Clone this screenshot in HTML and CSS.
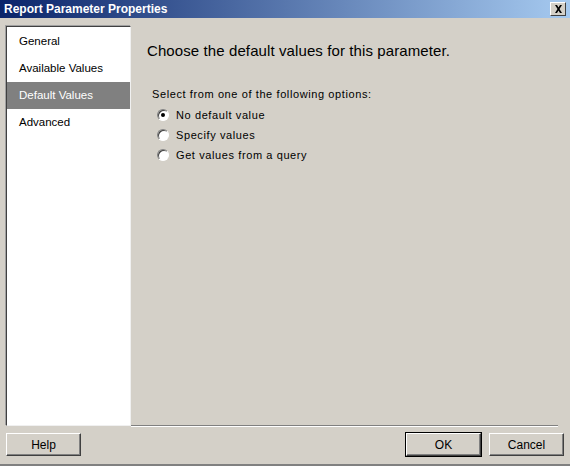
FILE: index.html
```html
<!DOCTYPE html>
<html lang="en">
<head>
    <meta charset="UTF-8">
    <title>Report Parameter Properties</title>
    <link rel="stylesheet" href="styles.css">
</head>
<body>
    <div class="window">
        <div class="titlebar">
            <span class="title">Report Parameter Properties</span>
            <span class="close-btn">
                <svg width="9" height="8" viewBox="0 0 9 8">
                    <path d="M1 0h2l1.5 2.5L6 0h2L5.5 4L8 8H6L4.5 5.5L3 8H1l2.5-4z" fill="#000"/>
                </svg>
            </span>
        </div>
        <div class="main">
            <ul class="nav">
                <li>General</li>
                <li>Available Values</li>
                <li class="selected">Default Values</li>
                <li>Advanced</li>
            </ul>
            <div class="content">
                <h1 class="heading">Choose the default values for this parameter.</h1>
                <p class="prompt">Select from one of the following options:</p>
                <div class="options">
                    <label class="option"><span class="radio checked"></span>No default value</label>
                    <label class="option"><span class="radio"></span>Specify values</label>
                    <label class="option"><span class="radio"></span>Get values from a query</label>
                </div>
            </div>
        </div>
        <div class="footer">
            <button class="btn">Help</button>
            <div class="spacer"></div>
            <button class="btn default">OK</button>
            <button class="btn">Cancel</button>
        </div>
    </div>
</body>
</html>
```

FILE: styles.css
```css
body {
    margin: 0;
    background: #d4d0c8;
    font-family: "Liberation Sans", Arial, sans-serif;
    font-size: 11px;
    color: #000;
}

.window {
    width: 570px;
    height: 466px;
    display: flex;
    flex-direction: column;
    box-sizing: border-box;
    border-bottom: 2px solid #808080;
}

.titlebar {
    height: 18px;
    flex: none;
    display: flex;
    align-items: center;
    justify-content: space-between;
    padding: 0 4px;
    background: linear-gradient(to right, #0a246a, #a6caf0);
}

.title {
    color: #fff;
    font-weight: bold;
    font-size: 12px;
}

.close-btn {
    width: 16px;
    height: 14px;
    box-sizing: border-box;
    background: #d4d0c8;
    border: 1px solid;
    border-color: #fff #404040 #404040 #fff;
    display: flex;
    align-items: center;
    justify-content: center;
}

.main {
    flex: none;
    display: flex;
    padding: 8px 6px 0 6px;
}

.nav {
    list-style: none;
    margin: 0;
    padding: 1px 0 0 0;
    width: 125px;
    height: 400px;
    box-sizing: border-box;
    background: #fff;
    border: 1px solid;
    border-color: #404040 #f0f0f0 #f0f0f0 #404040;
    box-shadow: -1px -1px 0 #a0a0a0;
}

.nav li {
    height: 27px;
    line-height: 27px;
    padding-left: 12px;
    font-size: 11.5px;
}

.nav li.selected {
    background: #808080;
    color: #fff;
}

.content {
    flex: 1;
    height: 400px;
    box-sizing: border-box;
    padding: 0 0 0 16px;
    border-bottom: 1px solid #808080;
    box-shadow: 0 1px 0 #fff;
    margin-right: 6px;
}

.heading {
    margin: 16px 0 0 0;
    font-weight: normal;
    font-size: 15px;
    letter-spacing: 0.1px;
}

.prompt {
    margin: 29px 0 0 5px;
    letter-spacing: 0.6px;
}

.options {
    margin: 8px 0 0 10px;
    display: flex;
    flex-direction: column;
    gap: 7px;
    letter-spacing: 0.6px;
}

.option {
    display: flex;
    align-items: center;
    height: 13px;
}

.radio {
    width: 12px;
    height: 12px;
    box-sizing: border-box;
    border-radius: 50%;
    background: #fff;
    border: 1px solid;
    border-color: #808080 #fff #fff #808080;
    box-shadow: inset 1px 1px 0 #404040;
    margin-right: 7px;
    position: relative;
}

.radio.checked::after {
    content: "";
    position: absolute;
    left: 3px;
    top: 3px;
    width: 4px;
    height: 4px;
    border-radius: 50%;
    background: #000;
}

.footer {
    display: flex;
    gap: 8px;
    padding: 7px 6px 0 6px;
    box-sizing: border-box;
}

.spacer {
    flex: 1;
}

.btn {
    width: 75px;
    height: 23px;
    font-family: "Liberation Sans", Arial, sans-serif;
    font-size: 12px;
    background: #d4d0c8;
    border: 1px solid;
    border-color: #fff #404040 #404040 #fff;
    box-shadow: inset -1px -1px 0 #808080;
    padding: 0;
}

.btn.default {
    outline: 1px solid #000;
    outline-offset: 0;
}
```
